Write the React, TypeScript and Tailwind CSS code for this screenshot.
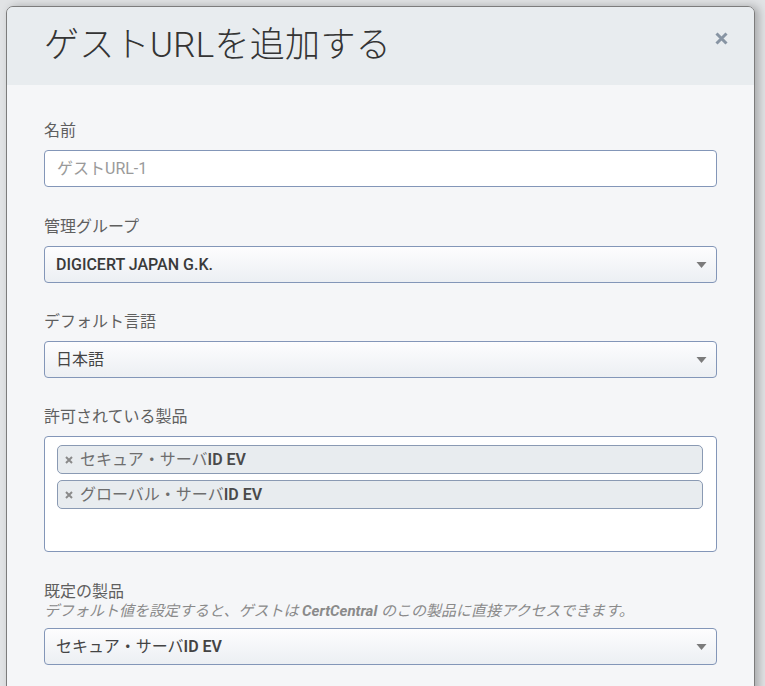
import React from "react";

const font = { fontFamily: "Roboto, 'Noto Sans CJK JP', sans-serif" };

function Caret() {
  return (
    <svg width="11" height="7" viewBox="0 0 11 7" className="absolute right-[9px] top-1/2 -translate-y-1/2">
      <path d="M0.5 0.5 L10.5 0.5 L5.5 6.5 Z" fill="#7b7b7b" />
    </svg>
  );
}

function Select({ children }: { children: React.ReactNode }) {
  return (
    <div className="relative flex h-[37px] items-center rounded-[4px] border border-[#8396b8] bg-gradient-to-b from-[#fdfdfe] to-[#eceff3] pl-[11px] text-[16px] text-[#3a3a3a]">
      {children}
      <Caret />
    </div>
  );
}

function Label({ children }: { children: React.ReactNode }) {
  return <div className="mb-[9px] text-[16px] leading-[20px] text-[#5f5f5f]">{children}</div>;
}

function Tag({ jp }: { jp: string }) {
  return (
    <div className="flex h-[29px] items-center rounded-[5px] border border-[#8a9ab3] bg-[#e8ecef] pl-[7px] text-[16px]">
      <svg width="8" height="8" viewBox="0 0 8 8" className="mr-[7px]">
        <path d="M1 1 L7 7 M7 1 L1 7" stroke="#8a8a8a" strokeWidth="2" />
      </svg>
      <span className="text-[#6e6e6e]">{jp}</span>
      <span className="font-semibold text-[#4a4a4a]">ID EV</span>
    </div>
  );
}

export default function App() {
  return (
    <div style={font} className="h-[686px] w-[765px] overflow-hidden bg-[#e1e3e5] pl-[6px] pt-[6px]">
      <div className="w-[749px] overflow-hidden rounded-t-[7px] border border-[#7c7c7c] shadow-[4px_0_8px_rgba(0,0,0,0.25)]">
        <div className="relative flex h-[78px] items-center bg-[#e8ecef] pl-[37px]">
          <h1 className="text-[35px] font-light tracking-[0.3px] text-[#343434]">ゲストURLを追加する</h1>
          <svg width="13" height="13" viewBox="0 0 13 13" className="absolute right-[26px] top-[25px]">
            <path d="M1.5 1.5 L11.5 11.5 M11.5 1.5 L1.5 11.5" stroke="#8794a3" strokeWidth="3" />
          </svg>
        </div>
        <div className="bg-[#f5f6f8] pl-[37px] pr-[37px] pt-[36px] pb-[40px]">
          <Label>名前</Label>
          <div className="flex h-[37px] items-center rounded-[4px] border border-[#8396b8] bg-white pl-[12px] text-[16px] text-[#9a9a9a]">
            ゲストURL-1
          </div>

          <div className="mt-[30px]">
            <Label>管理グループ</Label>
            <Select>
              <span className="font-medium">DIGICERT JAPAN G.K.</span>
            </Select>
          </div>

          <div className="mt-[29px]">
            <Label>デフォルト言語</Label>
            <Select>
              <span className="text-[#444]">日本語</span>
            </Select>
          </div>

          <div className="mt-[29px]">
            <Label>許可されている製品</Label>
            <div className="flex h-[116px] flex-col gap-[6px] rounded-[4px] border border-[#8396b8] bg-white pl-[12px] pr-[13px] pt-[8px]">
              <Tag jp="セキュア・サーバ" />
              <Tag jp="グローバル・サーバ" />
            </div>
          </div>

          <div className="mt-[30px]">
            <div className="text-[16px] leading-[20px] text-[#5f5f5f]">既定の製品</div>
            <div className="mb-[8px] text-[15px] italic leading-[18px] text-[#8a8a8a]">
              デフォルト値を設定すると、ゲストは <span className="font-bold">CertCentral</span> のこの製品に直接アクセスできます。
            </div>
            <Select>
              <span className="text-[#444]">
                セキュア・サーバ<span className="font-semibold">ID EV</span>
              </span>
            </Select>
          </div>
        </div>
      </div>
    </div>
  );
}
